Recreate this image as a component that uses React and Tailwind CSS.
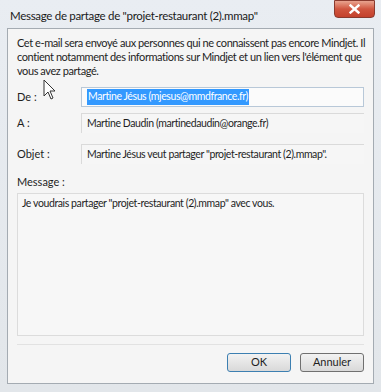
import React from 'react'

const font = { fontFamily: 'Lato, "Noto Sans", sans-serif' }

const Cursor = () => (
  <svg width="14" height="22" viewBox="0 0 14 22" className="absolute left-[43px] top-[79px]">
    <path d="M1 1 L1 17 L5 13 L8 20 L10 19 L7 12 L12 12 Z" fill="#fff" stroke="#333" strokeWidth="1" strokeLinejoin="round" />
  </svg>
)

const Field = ({ label, children, editable }) => (
  <div className="flex items-center">
    <div className="w-[64px] shrink-0 text-[11px] text-[#1e1e1e]">{label}</div>
    <div
      className={`flex-1 h-[20px] flex items-center px-[5px] text-[10.5px] tracking-[-0.4px] text-[#1e1e1e] whitespace-nowrap ${
        editable
          ? 'border border-[#b8c8d8] bg-[#fbfbfb]'
          : 'border-t border-l border-[#dadada] bg-[#f6f6f6]'
      }`}
    >
      {children}
    </div>
  </div>
)

export default function App() {
  return (
    <div className="relative w-[381px] h-[392px] overflow-hidden bg-gradient-to-b from-[#e9edf2] to-[#e2e6ea]" style={font}>
      {/* title bar */}
      <div className="flex items-start h-[28px]">
        <div className="pl-[10px] pt-[7px] text-[11.5px] tracking-[-0.3px] text-[#1a1a1a]">Message de partage de "projet-restaurant (2).mmap"</div>
        <div className="ml-auto mr-[6px] w-[41px] h-[18px] rounded-b-[4px] border border-[#8a3a2e] bg-gradient-to-b from-[#e8a38f] via-[#d0553f] to-[#c4412c] flex items-center justify-center">
          <svg width="11" height="10" viewBox="0 0 11 10">
            <path d="M1.5 1.5 L9.5 8.5 M9.5 1.5 L1.5 8.5" stroke="#fff" strokeWidth="2.4" strokeLinecap="square" />
          </svg>
        </div>
      </div>

      {/* client area */}
      <div className="mx-[7px] h-[356px] border border-[#a4abb2] bg-[#f5f5f5] flex flex-col px-[9px]">
        <div className="pt-[7px] text-[11px] tracking-[-0.42px] leading-[14px] text-[#1e1e1e] whitespace-nowrap">
          <div>Cet e-mail sera envoyé aux personnes qui ne connaissent pas encore Mindjet. Il</div>
          <div>contient notamment des informations sur Mindjet et un lien vers l'élément que</div>
          <div>vous avez partagé.</div>
        </div>

        <div className="mt-[9px] flex flex-col gap-[6px]">
          <Field label="De :" editable>
            <span className="bg-[#3399ff] text-white px-[1px]">Martine Jésus (mjesus@mmdfrance.fr)</span>
          </Field>
          <Field label="A :">Martine Daudin (martinedaudin@orange.fr)</Field>
          <div className="mt-[5px]">
            <Field label="Objet :">Martine Jésus veut partager "projet-restaurant (2).mmap".</Field>
          </div>
        </div>

        <div className="mt-[10px] text-[11px] text-[#1e1e1e]">Message :</div>
        <div className="mt-[2px] h-[143px] border border-[#dcdcdc] bg-[#f7f7f7] px-[4px] py-[2px] text-[10.5px] tracking-[-0.4px] text-[#1e1e1e]">
          Je voudrais partager "projet-restaurant (2).mmap" avec vous.
        </div>
        <div className="mt-[8px] h-px bg-[#e2e2e2]" />

        <div className="mt-[8px] flex justify-end gap-[9px]">
          <button className="w-[64px] h-[19px] rounded-[3px] border border-[#3c7fb1] bg-gradient-to-b from-[#f2f2f2] to-[#d9d9d9] text-[11px] text-[#1e1e1e]">OK</button>
          <button className="w-[64px] h-[19px] rounded-[3px] border border-[#707070] bg-gradient-to-b from-[#f2f2f2] to-[#d9d9d9] text-[11px] text-[#1e1e1e]">Annuler</button>
        </div>
      </div>

      <Cursor />
    </div>
  )
}
